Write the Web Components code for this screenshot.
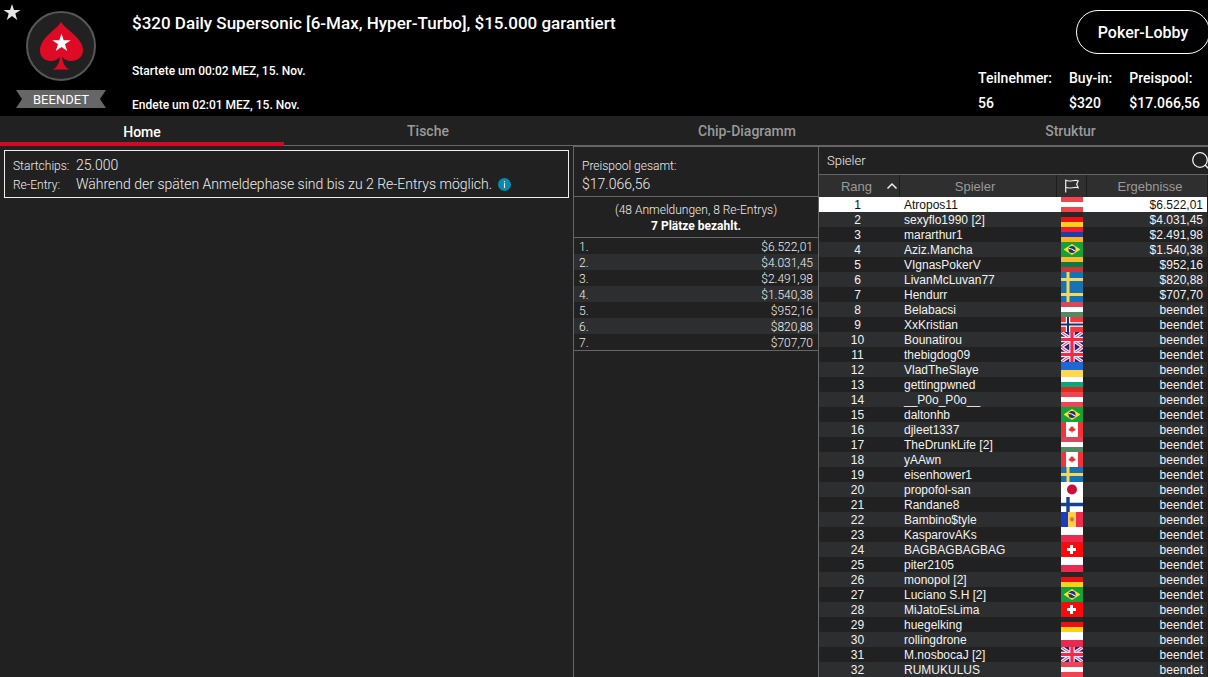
<!DOCTYPE html>
<html lang="de">
<head>
<meta charset="utf-8">
<title>Turnier-Lobby</title>
<style>
html,body{margin:0;height:100%}
body{background:#212121;color:#e8e8e8;font-family:Roboto,"Liberation Sans",sans-serif;overflow:hidden}
</style>
</head>
<body>
<tournament-lobby></tournament-lobby>
<script>
const define=(name,html,setup)=>customElements.define(name,class extends HTMLElement{
  constructor(){
    super();
    this.attachShadow({mode:'open'}).innerHTML=html;
  }
  connectedCallback(){if(setup)setup(this,this.shadowRoot)}
});

/* One country flag, 22 x 15 */
const stripes=(a,b,c)=>`<rect width="22" height="5" fill="${a}"/><rect y="5" width="22" height="5" fill="${b}"/><rect y="10" width="22" height="5" fill="${c}"/>`;
const FLAGS={
  at:stripes('#f04452','#fff','#f04452'),
  de:stripes('#272727','#ee1010','#fdd116'),
  am:stripes('#f01c36','#1d3fae','#fcb520'),
  lt:stripes('#fdb934','#0a7a48','#d13338'),
  hu:stripes('#d8475a','#fff','#528a65'),
  bg:stripes('#fff','#0aa57c','#dc2c1e'),
  ua:'<rect width="22" height="8" fill="#1f66d6"/><rect y="8" width="22" height="7" fill="#ffd94a"/>',
  pl:'<rect width="22" height="8" fill="#fff"/><rect y="8" width="22" height="7" fill="#e82a50"/>',
  se:'<rect width="22" height="15" fill="#1573b4"/><path d="M0 7.500H22M7 0V15" stroke="#f7d65a" stroke-width="3"/>',
  fi:'<rect width="22" height="15" fill="#fff"/><path d="M0 7.500H22M7 0V15" stroke="#14428c" stroke-width="3.400"/>',
  no:'<rect width="22" height="15" fill="#f1383f"/><path d="M0 7.500H22M7 0V15" stroke="#fff" stroke-width="4.400"/><path d="M0 7.500H22M7 0V15" stroke="#123272" stroke-width="2"/>',
  br:'<rect width="22" height="15" fill="#12a13b"/><path d="M11 2L19.500 7.500L11 13L2.500 7.500Z" fill="#fde02c"/><circle cx="11" cy="7.500" r="3.500" fill="#1c3378"/><path d="M8 6.500Q11 6.400 13.800 9" stroke="#fff" stroke-width="1.100" fill="none"/>',
  ca:'<rect width="22" height="15" fill="#fff"/><path d="M0 0H5V15H0ZM17 0H22V15H17Z" fill="#f63238"/><path d="M11 4l1.200 1.600.8-.3-.2 1.400 1.700-.2-.5 1 .6.500-2.400 1.500H11.300V11H10.700V9.500H9.800L7.400 8l.6-.5-.5-1 1.700.2L9 5.300l.8.300Z" fill="#f02a30"/>',
  jp:'<rect width="22" height="15" fill="#fff"/><circle cx="11" cy="7.500" r="5" fill="#cc0f38"/>',
  md:'<rect width="22" height="15" fill="#fed045"/><rect width="7" height="15" fill="#1b3cc4"/><rect x="15" width="7" height="15" fill="#ee2c4c"/><path d="M11 4.500l2.300 2.300-1 2.800h-2.600l-1-2.800Z" fill="#d07a31"/>',
  ch:'<rect width="22" height="15" fill="#f90b0b"/><path d="M6 7.500H15M10.500 3V12" stroke="#fff" stroke-width="3"/>',
  gb:'<rect width="22" height="15" fill="#22247e"/><path d="M0 0L22 15M22 0L0 15" stroke="#f3e8f2" stroke-width="3.400"/><path d="M0 0L22 15M22 0L0 15" stroke="#e0355a" stroke-width="1"/><path d="M11 0V15M0 7.500H22" stroke="#f3e8f2" stroke-width="5.400"/><path d="M11 0V15M0 7.500H22" stroke="#ee2a46" stroke-width="3.200"/>'
};
define('country-flag','<style>:host{display:block;width:22px;height:15px;margin:0 auto}svg{display:block}</style><svg width="22" height="15" viewBox="0 0 22 15" aria-hidden="true"></svg>',
  (el,r)=>{r.querySelector('svg').innerHTML=FLAGS[el.getAttribute('code')]||''});

/* Round tournament emblem with its state ribbon */
define('tournament-badge',`<style>
:host{display:flex;flex-direction:column;align-items:center;width:90px;gap:9px}
svg{display:block}
.ribbon{width:90px;height:18px;background:#666;clip-path:polygon(0 0,100% 0,calc(100% - 6px) 50%,100% 100%,0 100%,6px 50%);text-align:center;font-size:13px;line-height:19px;color:#fff}
</style>
<svg width="70" height="70" viewBox="0 0 70 70" aria-hidden="true">
<circle cx="35" cy="35" r="34" fill="#212121" stroke="#575757" stroke-width="2"/>
<path d="M35 11C31 18 14 27 14 39.500C14 46 19 50 25 50C29 50 32.500 48 34 45.500C33.500 52 31 56.500 26.500 58.500H43.500C39 56.500 36.500 52 36 45.500C37.500 48 41 50 45 50C51 50 57 46 57 39.500C57 27 39 18 35 11Z" fill="#df0a26"/>
<path d="M35.500 22.500L37.700 29.200H44.700L39 33.300L41.200 40L35.500 35.900L29.800 40L32 33.300L26.300 29.200H33.300Z" fill="#fff"/>
</svg>
<div class="ribbon"><slot></slot></div>`);

/* Caption with its value below */
define('stat-item',`<style>
:host{display:block;font-size:14px;font-weight:500;line-height:25px;color:#fff;white-space:nowrap}
</style><div><slot name="label"></slot></div><div><slot></slot></div>`);

define('lobby-header',`<style>
:host{display:grid;grid-template-columns:132px minmax(0,1fr) auto;height:116px;background:#000;color:#fff;position:relative}
tournament-badge{margin:11px 0 0 16px}
.fav{position:absolute;left:3px;top:3px;padding:0;border:0;background:none}
svg{display:block}
h1{font-size:17px;line-height:20px;font-weight:500;margin:13px 0 28px}
p{font-size:12px;line-height:20px;font-weight:500;margin:0 0 14px}
.side{display:flex;flex-direction:column;align-items:flex-end}
.lobby{margin-top:10px;width:134px;height:44px;border:1px solid #fff;border-radius:22px;background:#000;color:#fff;font:500 16px Roboto,sans-serif;margin-right:-2px;padding:0}
.stats{display:flex;gap:17px;margin:12px 8px 0 0}
</style>
<tournament-badge>BEENDET</tournament-badge>
<button class="fav" aria-label="Favorit"><svg width="18" height="18" viewBox="0 0 18 18"><path d="M9 1L11 7H17.500L12.300 10.600L14.200 17L9 13.100L3.800 17L5.700 10.600L.5 7H7Z" fill="#e6e6e6"/></svg></button>
<div><h1>$320 Daily Supersonic [6-Max, Hyper-Turbo], $15.000 garantiert</h1>
<p>Startete um 00:02 MEZ, 15. Nov.</p><p>Endete um 02:01 MEZ, 15. Nov.</p></div>
<div class="side"><button class="lobby">Poker-Lobby</button>
<div class="stats">
<stat-item><span slot="label">Teilnehmer:</span>56</stat-item>
<stat-item><span slot="label">Buy-in:</span>$320</stat-item>
<stat-item><span slot="label">Preispool:</span>$17.066,56</stat-item>
</div></div>`);

define('lobby-tabs',`<style>
:host{display:block;border-bottom:1px solid #666;height:29px}
nav{display:grid;grid-template-columns:284fr 288fr 350fr 297fr;height:30px;margin-right:-11px}
a{display:block;text-align:center;font-size:14px;font-weight:500;line-height:30px;color:#9a9a9a;text-decoration:none;box-sizing:border-box}
a[aria-current]{color:#fff;border-bottom:4px solid #d00a24;line-height:32px;height:30px}
</style><nav><a href="#home" aria-current="page">Home</a><a href="#tische">Tische</a><a href="#chips">Chip-Diagramm</a><a href="#struktur">Struktur</a></nav>`);

define('entry-info',`<style>
:host{display:block;margin:4px;border:1px solid #eee;height:46px;box-sizing:content-box;font-weight:300;color:#eee}
dl{display:grid;grid-template-columns:63px minmax(0,1fr);grid-auto-rows:19px;margin:0;padding:5px 8px;line-height:19px}
dt{font-size:12px;line-height:20px}dd{margin:0;font-size:14px;display:flex;align-items:center;gap:6px;white-space:nowrap}
svg{display:block}
</style><dl><dt>Startchips:</dt><dd>25.000</dd><dt>Re-Entry:</dt><dd><span>Während der späten Anmeldephase sind bis zu 2 Re-Entrys möglich.</span>
<svg width="13" height="13" viewBox="0 0 13 13" role="img" aria-label="Info"><circle cx="6.500" cy="6.500" r="6.500" fill="#078bb0"/><path d="M6.500 5.200V10M6.500 3V4.200" stroke="#fff" stroke-width="1.100"/></svg></dd></dl>`);

const PRIZES=['$6.522,01','$4.031,45','$2.491,98','$1.540,38','$952,16','$820,88','$707,70'];
define('prize-panel',`<style>
:host{display:block;border:solid #666;border-width:1px 0 0 1px;font-weight:300;color:#eee}
.total{height:50px;box-sizing:border-box;padding:10px 8px 0;border-bottom:1px solid #666;font-size:12px;line-height:18px}
.total strong{display:block;font-size:14px;font-weight:300}
.sum{height:41px;box-sizing:border-box;padding-top:5px;border-bottom:1px solid #666;text-align:center;font-size:12px;line-height:16px}
.sum b{display:block;font-weight:700;color:#fff}
table{width:100%;border-collapse:separate;border-spacing:0;border-bottom:1px solid #666;font-size:12px;line-height:14px}
td{padding:2px 5px 0}td+td{text-align:right}
tr:nth-child(even){background:#2d2e30}
</style><div class="total">Preispool gesamt:<strong>$17.066,56</strong></div>
<div class="sum">(48 Anmeldungen, 8 Re-Entrys)<b>7 Plätze bezahlt.</b></div>
<table><tbody></tbody></table>`,(el,r)=>{
  r.querySelector('tbody').innerHTML=PRIZES.map((p,i)=>`<tr><td>${i+1}.</td><td>${p}</td></tr>`).join('');
});

const PLAYERS=[
['Atropos11','at'],['sexyflo1990 [2]','de'],['mararthur1','am'],['Aziz.Mancha','br'],['VIgnasPokerV','lt'],['LivanMcLuvan77','se'],['Hendurr','se'],['Belabacsi','hu'],
['XxKristian','no'],['Bounatirou','gb'],['thebigdog09','gb'],['VladTheSlaye','ua'],['gettingpwned','bg'],['__P0o_P0o__','at'],['daltonhb','br'],['djleet1337','ca'],
['TheDrunkLife [2]','hu'],['yAAwn','ca'],['eisenhower1','se'],['propofol-san','jp'],['Randane8','fi'],['Bambino$tyle','md'],['KasparovAKs','pl'],['BAGBAGBAGBAG','ch'],
['piter2105','pl'],['monopol [2]','de'],['Luciano S.H [2]','br'],['MiJatoEsLima','ch'],['huegelking','de'],['rollingdrone','pl'],['M.nosbocaJ [2]','gb'],['RUMUKULUS','at']];
define('player-list',`<style>
:host{display:block;border:solid #666;border-width:1px 0 0 1px;min-width:0;overflow:hidden}
.bar{display:flex;justify-content:space-between;align-items:center;height:27px;border-bottom:1px solid #666;padding-left:8px;font-size:13px;font-weight:300;color:#eee}
.bar h2{font:inherit;margin:0}
button{border:0;background:none;padding:0;display:block;margin-right:-3px}
svg{display:block}
table{width:calc(100% - 1px);table-layout:fixed;border-collapse:separate;border-spacing:0;font:12px "Liberation Sans",Arial,sans-serif;color:#f2f2f2}
thead{background:#2f2f2f}
th{font-size:13px;font-weight:400;color:#999;height:22px;padding:0;border-right:1px solid #1c1c1c;box-sizing:border-box}
th:last-child{border-right:0}
.rank{width:81px}.name{padding-right:6px}.flag{width:30px}.res{width:120px;padding-left:6px}
.sort{display:grid;grid-template-columns:1fr auto;align-items:center;padding-right:1px}
th .sort span{padding-left:8px}
th.flag svg{margin:0 auto}
td{padding:0;height:15px;white-space:nowrap}
td:nth-child(odd),td:nth-child(even){box-sizing:border-box;line-height:13px;padding-top:2px}
td:nth-child(1){text-align:center;padding-right:4px}
td:nth-child(2){padding-left:4px}
tbody td:nth-child(3){padding-top:0}
td:nth-child(4){text-align:right;padding-right:4px}
tbody tr:nth-child(even){background:#2d2e30}
tbody tr:first-child{background:#fff;color:#111}
</style>
<div class="bar"><h2>Spieler</h2><button aria-label="Suchen"><svg width="20" height="20" viewBox="0 0 20 20" fill="none" stroke="#eee" stroke-width="1.300"><circle cx="9" cy="9" r="7.300"/><path d="M14 14L19 19"/></svg></button></div>
<table><thead><tr><th class="rank"><div class="sort"><span>Rang</span><svg width="12" height="8" viewBox="0 0 12 8"><path d="M1.500 6.500L6 2L10.500 6.500" fill="none" stroke="#eee" stroke-width="1.500"/></svg></div></th><th class="name">Spieler</th>
<th class="flag" aria-label="Land"><svg width="14" height="14" viewBox="0 0 14 14" fill="none" stroke="#eee" stroke-width="1.200"><path d="M.7 .5V13.500M.7 1.300C5 3.400 9 .4 13.200 1.800L11.700 5.200L13.200 8.800C9 7.400 5 10.400 .7 8.300"/></svg></th><th class="res">Ergebnisse</th></tr></thead><tbody></tbody></table>`,(el,r)=>{
  r.querySelector('tbody').innerHTML=PLAYERS.map(([n,f],i)=>`<tr><td>${i+1}</td><td>${n}</td><td><country-flag code="${f}"></country-flag></td><td>${PRIZES[i]||'beendet'}</td></tr>`).join('');
});

define('tournament-lobby',`<style>
:host{display:flex;flex-direction:column;height:100%;overflow:hidden}
main{display:grid;grid-template-columns:minmax(0,573fr) minmax(0,245fr) minmax(0,390fr);flex:1;min-height:0}
</style><lobby-header></lobby-header><lobby-tabs></lobby-tabs>
<main><section><entry-info></entry-info></section><prize-panel></prize-panel><player-list></player-list></main>`);
</script>
</body>
</html>
